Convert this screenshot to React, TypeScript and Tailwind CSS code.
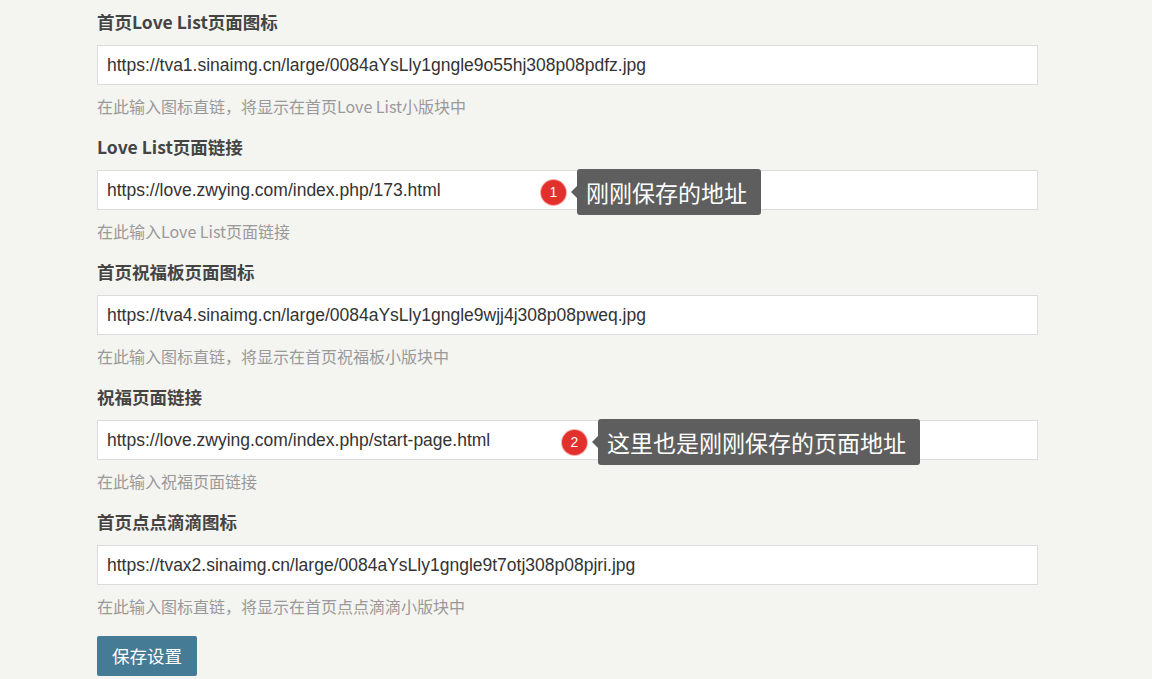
import type { ReactNode } from "react";

type Field = {
  label: string;
  value: string;
  help: string;
  note?: { n: number; text: string; left: number };
};

const fields: Field[] = [
  {
    label: "首页Love List页面图标",
    value: "https://tva1.sinaimg.cn/large/0084aYsLly1gngle9o55hj308p08pdfz.jpg",
    help: "在此输入图标直链，将显示在首页Love List小版块中",
  },
  {
    label: "Love List页面链接",
    value: "https://love.zwying.com/index.php/173.html",
    help: "在此输入Love List页面链接",
    note: { n: 1, text: "刚刚保存的地址", left: 444 },
  },
  {
    label: "首页祝福板页面图标",
    value: "https://tva4.sinaimg.cn/large/0084aYsLly1gngle9wjj4j308p08pweq.jpg",
    help: "在此输入图标直链，将显示在首页祝福板小版块中",
  },
  {
    label: "祝福页面链接",
    value: "https://love.zwying.com/index.php/start-page.html",
    help: "在此输入祝福页面链接",
    note: { n: 2, text: "这里也是刚刚保存的页面地址", left: 465 },
  },
  {
    label: "首页点点滴滴图标",
    value: "https://tvax2.sinaimg.cn/large/0084aYsLly1gngle9t7otj308p08pjri.jpg",
    help: "在此输入图标直链，将显示在首页点点滴滴小版块中",
  },
];

const cjk = "font-['Microsoft_YaHei','Noto_Sans_CJK_SC',sans-serif]";

// numbered marker plus dark bubble laid over the input
function Callout({ n, text, left }: { n: number; text: string; left: number }): ReactNode {
  return (
    <div className="absolute top-[-1px] flex items-center" style={{ left }}>
      <span className="flex h-[25px] w-[25px] items-center justify-center rounded-full bg-[#e2302c] text-[14px] leading-none text-white ring-1 ring-[#f7b0ae] font-['Liberation_Sans',sans-serif]">
        {n}
      </span>
      <div className="relative ml-[11px] flex h-[46px] items-center rounded-[3px] bg-[#5e5e5e] pl-[9px] pr-[14px]">
        <span className="absolute left-[-6px] top-1/2 -mt-[6px] h-0 w-0 border-y-[6px] border-r-[6px] border-y-transparent border-r-[#5e5e5e]" />
        <span className={`${cjk} text-[23px] leading-none text-white`}>{text}</span>
      </div>
    </div>
  );
}

export default function App() {
  return (
    <div className="min-h-[679px] w-full bg-[#f4f4f1] pl-[97px] pt-[11px]">
      <form className="w-[941px]" onSubmit={(e) => e.preventDefault()}>
        {fields.map((f) => (
          <div key={f.label} className="mb-[20px]">
            <label className={`${cjk} block h-[22px] text-[17.5px] font-bold leading-[22px] text-[#444]`}>
              {f.label}
            </label>
            <div className="relative mt-[12px]">
              <input
                readOnly
                value={f.value}
                className="block h-[40px] w-full border border-[#dcdcdc] bg-white px-[9px] text-[17.5px] text-[#333] outline-none font-['Liberation_Sans',Arial,sans-serif]"
              />
              {f.note && <Callout {...f.note} />}
            </div>
            <p className={`${cjk} mt-[11px] h-[20px] text-[16px] leading-[20px] text-[#999]`}>{f.help}</p>
          </div>
        ))}
        <button
          type="submit"
          className={`${cjk} h-[40px] w-[100px] rounded-[2px] bg-[#467b96] text-[17.5px] text-white`}
        >
          保存设置
        </button>
      </form>
    </div>
  );
}
